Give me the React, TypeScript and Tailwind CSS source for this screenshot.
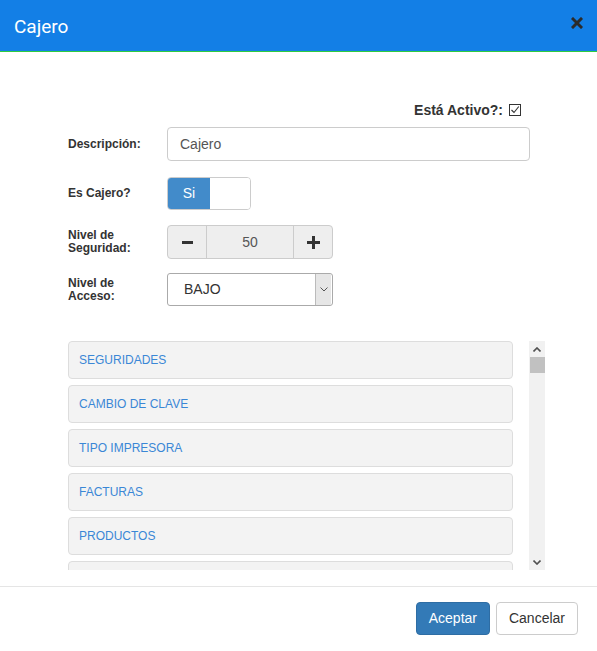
import React from 'react';

const MODULES = ['SEGURIDADES', 'CAMBIO DE CLAVE', 'TIPO IMPRESORA', 'FACTURAS', 'PRODUCTOS', 'CLIENTES'];

const Label: React.FC<{ children: React.ReactNode }> = ({ children }) => (
  <div className="w-[99px] text-[12px] leading-[13px] font-bold text-[#333]">{children}</div>
);

export default function App() {
  return (
    <div className="w-[597px] h-[651px] bg-white overflow-hidden font-['Liberation_Sans',Arial,sans-serif] text-[#333]">
      {/* Header */}
      <div className="h-[52px] bg-[#137fe6] border-b border-[#2ecc40] flex items-center justify-between pl-[14px] pr-[14px]">
        <h4 className="text-white text-[19px] font-['Roboto',sans-serif] leading-none mt-[2px]">Cajero</h4>
        <svg width="12" height="12" viewBox="0 0 12 12" className="mt-[-6px]">
          <path d="M2 2 L10 10 M10 2 L2 10" stroke="#2b2b2b" strokeWidth="3" strokeLinecap="square" />
        </svg>
      </div>

      {/* Body */}
      <div className="pl-[68px] pr-[52px] pt-[50px]">
        <div className="flex justify-end items-center h-[16px] pr-[24px]">
          <span className="text-[14px] font-bold text-[#333]">Está Activo?:</span>
          <span className="ml-[6px] w-[12px] h-[12px] border border-[#333] flex items-center justify-center">
            <svg width="10" height="10" viewBox="0 0 10 10">
              <path d="M1.5 5 L4 7.5 L8.8 1.5" stroke="#333" strokeWidth="1.1" fill="none" />
            </svg>
          </span>
        </div>

        <div className="mt-[9px] flex items-center h-[34px]">
          <Label>Descripción:</Label>
          <div className="w-[363px] h-[34px] border border-[#ccc] rounded-[4px] flex items-center px-[12px] text-[14px] text-[#555]">Cajero</div>
        </div>

        <div className="mt-[16px] flex items-center h-[33px]">
          <Label>Es Cajero?</Label>
          <div className="w-[84px] h-[33px] border border-[#ccc] rounded-[4px] flex overflow-hidden">
            <div className="w-[42px] bg-[#428bca] text-white text-[14px] flex items-center justify-center">Si</div>
            <div className="flex-1 bg-white"></div>
          </div>
        </div>

        <div className="mt-[15px] flex items-center h-[34px]">
          <Label>Nivel de<br />Seguridad:</Label>
          <div className="w-[166px] h-[34px] border border-[#ccc] rounded-[4px] flex bg-[#eee]">
            <div className="w-[39px] border-r border-[#ccc] flex items-center justify-center">
              <svg width="11" height="3" viewBox="0 0 11 3"><rect width="11" height="3" fill="#333" /></svg>
            </div>
            <div className="flex-1 flex items-center justify-center text-[14px] text-[#555]">50</div>
            <div className="w-[39px] border-l border-[#ccc] flex items-center justify-center">
              <svg width="13" height="13" viewBox="0 0 13 13">
                <rect x="0" y="5" width="13" height="3" fill="#333" />
                <rect x="5" y="0" width="3" height="13" fill="#333" />
              </svg>
            </div>
          </div>
        </div>

        <div className="mt-[14px] flex items-center h-[33px]">
          <Label>Nivel de<br />Acceso:</Label>
          <div className="w-[166px] h-[33px] border border-[#aaa] rounded-[3px] flex items-center">
            <span className="flex-1 pl-[16px] text-[14px] text-[#333]">BAJO</span>
            <div className="w-[16px] h-[31px] bg-[#e6e6e6] border-l border-[#bbb] flex items-center justify-center mr-[1px]">
              <svg width="8" height="5" viewBox="0 0 8 5"><path d="M0.5 0.5 L4 4 L7.5 0.5" stroke="#555" strokeWidth="1" fill="none" /></svg>
            </div>
          </div>
        </div>

        {/* Modules list */}
        <div className="mt-[35px] flex h-[229px]">
          <div className="w-[445px] overflow-hidden flex flex-col gap-[6px]">
            {MODULES.map((m) => (
              <div key={m} className="shrink-0 h-[38px] bg-[#f3f3f3] border border-[#ddd] rounded-[4px] flex items-center pl-[10px] text-[12px] text-[#3a87d6]">
                {m}
              </div>
            ))}
          </div>
          <div className="ml-[16px] w-[16px] bg-[#f1f1f1] flex flex-col items-center">
            <div className="h-[16px] flex items-center justify-center">
              <svg width="8" height="5" viewBox="0 0 8 5"><path d="M0.5 4.5 L4 1 L7.5 4.5" stroke="#505050" strokeWidth="1.6" fill="none" /></svg>
            </div>
            <div className="w-[15px] h-[16px] bg-[#c1c1c1]"></div>
            <div className="flex-1"></div>
            <div className="h-[16px] flex items-center justify-center">
              <svg width="8" height="5" viewBox="0 0 8 5"><path d="M0.5 0.5 L4 4 L7.5 0.5" stroke="#505050" strokeWidth="1.6" fill="none" /></svg>
            </div>
          </div>
        </div>
      </div>

      {/* Footer */}
      <div className="mt-[16px] border-t border-[#e5e5e5] flex justify-end gap-[6px] pt-[15px] pr-[19px]">
        <button className="h-[33px] px-[12px] bg-[#337ab7] border border-[#2e6da4] rounded-[4px] text-white text-[14px]">Aceptar</button>
        <button className="h-[33px] px-[12px] bg-white border border-[#ccc] rounded-[4px] text-[#333] text-[14px]">Cancelar</button>
      </div>
    </div>
  );
}
